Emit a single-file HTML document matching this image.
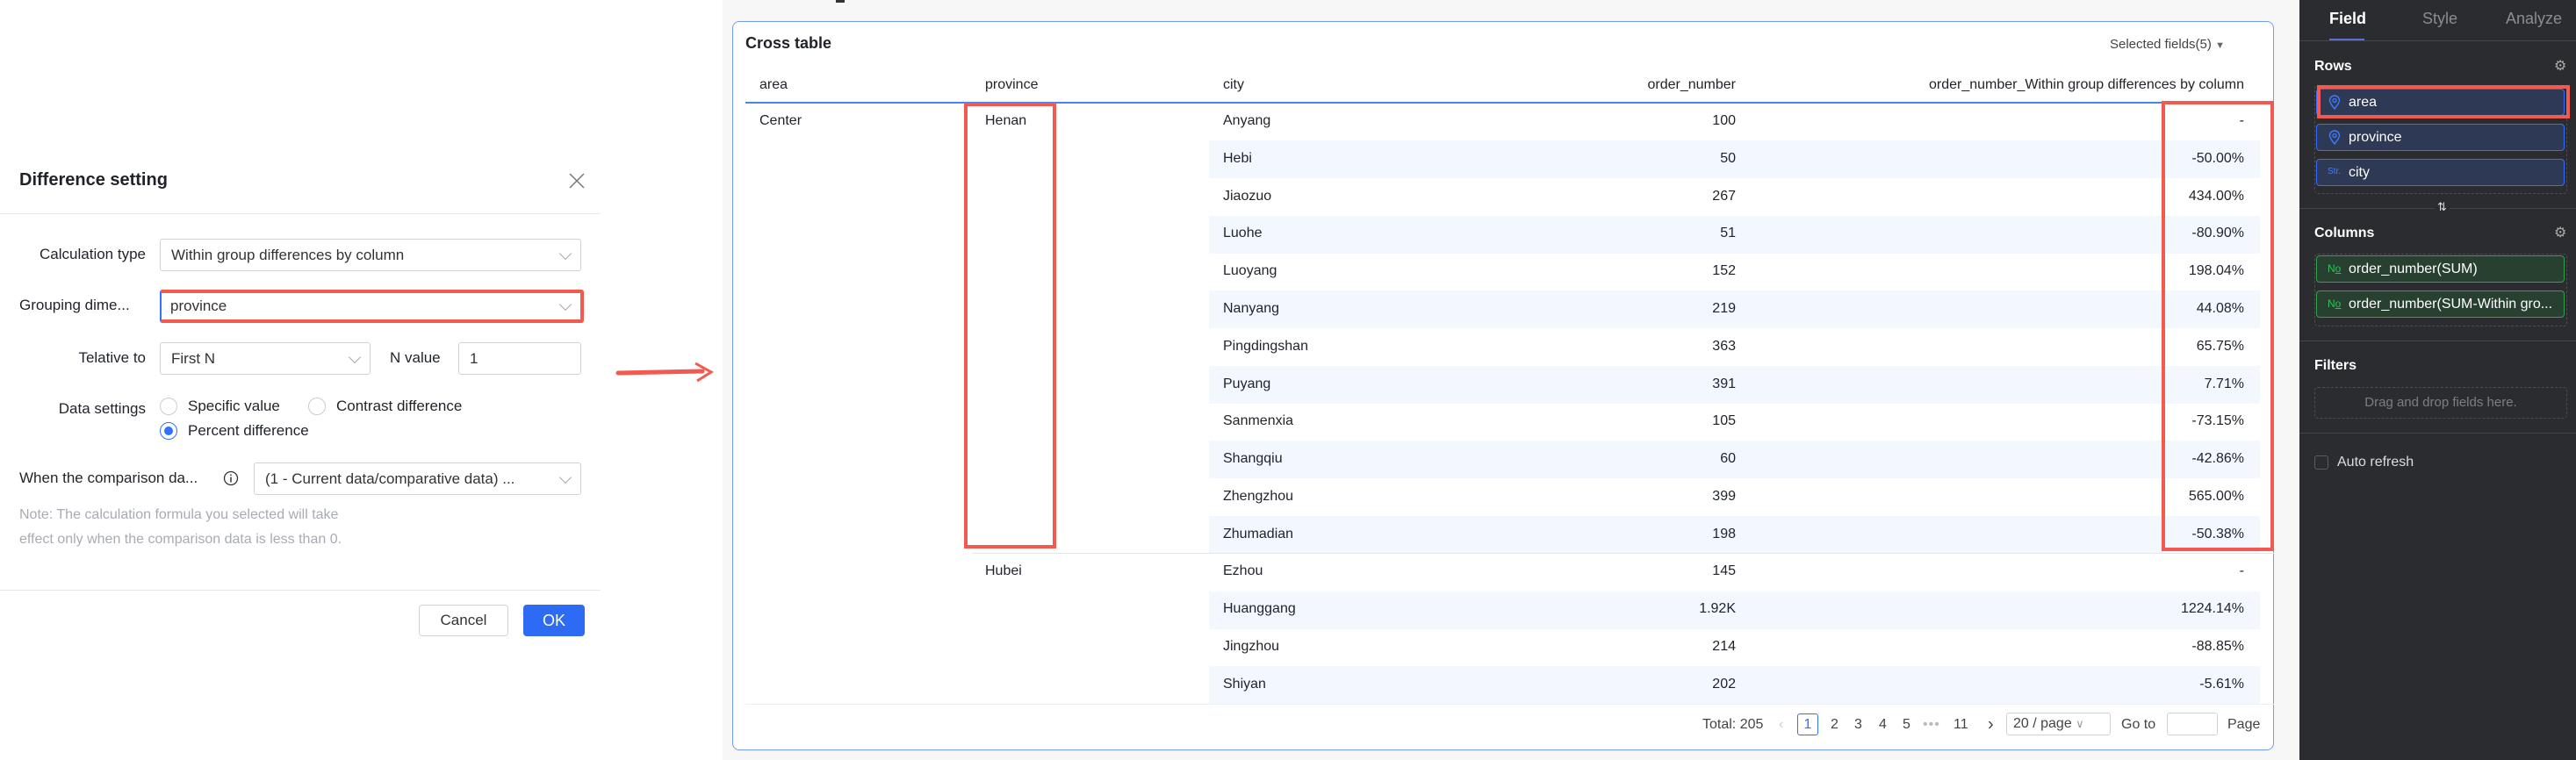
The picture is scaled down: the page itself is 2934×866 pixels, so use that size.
<!DOCTYPE html><html><head><meta charset="utf-8"><style>
*{box-sizing:border-box;margin:0;padding:0}
body{width:2934px;height:866px;position:relative;overflow:hidden;background:#fff;font-family:"Liberation Sans",Arial,sans-serif;color:#1f2329}
.a{position:absolute;white-space:nowrap}
.sel{position:absolute;border:1px solid #d0d3d6;border-radius:3px;background:#fff;font-size:17px;color:#333;padding-left:12px;display:flex;align-items:center}
.sel .ch{position:absolute;right:12px;top:50%;width:10px;height:10px;border-right:1.5px solid #aaa;border-bottom:1.5px solid #aaa;transform:translateY(-70%) rotate(45deg)}
.lbl{position:absolute;font-size:17px;color:#1f2329;text-align:right}
.radio{position:absolute;width:20px;height:20px;border:1px solid #c9cdd4;border-radius:50%;background:#fff}
.tx{position:absolute;font-size:16px;color:#1f2329;white-space:nowrap}
.r{text-align:right}
.band{position:absolute;left:1377px;width:1197px;height:43px;background:#f3f7fe}
.chip{position:absolute;left:2638px;width:283px;height:31px;border-radius:4px;font-size:16px;color:#fff;display:flex;align-items:center;padding-left:36px}
.rowc{background:#2e3a55;border:1px solid #3370ff}
.grn{background:#27402f;border:1px solid #2fa44c}
.dash{position:absolute;border:1px dashed #4a4c52;border-radius:4px}
.sep{position:absolute;left:2619px;width:315px;height:1px;background:#44464c}
.pg{position:absolute;top:826px;transform:translateY(-50%);font-size:16px;color:#444}
</style></head><body>
<!-- dialog -->
<div class="a" style="left:22px;top:194px;font-size:20px;font-weight:bold;color:#1f2329">Difference setting</div>
<svg class="a" style="left:648px;top:197px" width="18" height="18"><path d="M1 1L17 17M17 1L1 17" stroke="#777" stroke-width="1.5"/></svg>
<div class="a" style="left:0;top:243px;width:684px;height:1px;background:#e8e8e8"></div>
<div class="lbl" style="left:0;width:166px;top:280px">Calculation type</div>
<div class="sel" style="left:182px;top:272px;width:480px;height:37px">Within group differences by column<span class="ch"></span></div>
<div class="lbl" style="left:22px;top:338px;text-align:left">Grouping dime...</div>
<div class="sel" style="left:182px;top:330px;width:483px;height:38px;border:4px solid #f25a4f;border-left:2px solid #3370ff;padding-left:10px">province<span class="ch"></span></div>
<div class="lbl" style="left:0;width:166px;top:398px">Telative to</div>
<div class="sel" style="left:182px;top:390px;width:240px;height:37px">First N<span class="ch"></span></div>
<div class="lbl" style="left:444px;top:398px;text-align:left">N value</div>
<div class="sel" style="left:522px;top:390px;width:140px;height:37px">1</div>
<div class="lbl" style="left:0;width:166px;top:456px">Data settings</div>
<div class="radio" style="left:182px;top:453px"></div><div class="tx" style="left:214px;top:453px;font-size:17px">Specific value</div>
<div class="radio" style="left:351px;top:453px"></div><div class="tx" style="left:383px;top:453px;font-size:17px">Contrast difference</div>
<div class="radio" style="left:182px;top:481px;border-color:#3370ff"><div style="position:absolute;left:4px;top:4px;width:10px;height:10px;border-radius:50%;background:#3370ff"></div></div><div class="tx" style="left:214px;top:481px;font-size:17px">Percent difference</div>
<div class="lbl" style="left:22px;top:535px;text-align:left">When the comparison da...</div>
<svg class="a" style="left:254px;top:536px" width="18" height="18"><circle cx="9" cy="9" r="7.5" fill="none" stroke="#333" stroke-width="1.3"/><path d="M9 7.5V13.5M9 4.5V6" stroke="#333" stroke-width="1.5"/></svg>
<div class="sel" style="left:289px;top:527px;width:373px;height:37px">(1 - Current data/comparative data) ...<span class="ch"></span></div>
<div class="a" style="left:22px;top:573px;font-size:16px;color:#a8abb2;line-height:28px">Note: The calculation formula you selected will take<br>effect only when the comparison data is less than 0.</div>
<div class="a" style="left:0;top:672px;width:684px;height:1px;background:#e8e8e8"></div>
<div class="a" style="left:477px;top:689px;width:102px;height:36px;border:1px solid #d0d3d6;border-radius:4px;font-size:17px;display:flex;align-items:center;justify-content:center;color:#333">Cancel</div>
<div class="a" style="left:596px;top:689px;width:70px;height:36px;background:#2e6bf5;border-radius:4px;font-size:18px;display:flex;align-items:center;justify-content:center;color:#fff">OK</div>
<svg class="a" style="left:700px;top:410px" width="115" height="30"><path d="M4 15L100 13" stroke="#f25a4f" stroke-width="5" stroke-linecap="round"/><path d="M92 4L110 14L94 24" fill="none" stroke="#f25a4f" stroke-width="3"/></svg>
<!-- middle -->
<div class="a" style="left:823px;top:0;width:1796px;height:866px;background:#f7f7f7"></div>
<div class="a" style="left:952px;top:0;width:10px;height:3px;background:#333"></div>
<div class="a" style="left:834px;top:24px;width:1756px;height:831px;background:#fff;border:1.5px solid #6f9df7;border-radius:8px"></div>
<div class="a" style="left:849px;top:39px;font-size:18px;font-weight:bold;color:#1f2329">Cross table</div>
<div class="a" style="left:2403px;top:42px;font-size:15px;color:#444">Selected fields(5) <span style="font-size:11px;color:#666">▼</span></div>
<div class="tx" style="left:865px;top:88px">area</div>
<div class="tx" style="left:1122px;top:88px">province</div>
<div class="tx" style="left:1393px;top:88px">city</div>
<div class="tx r" style="left:1700px;width:277px;top:88px">order_number</div>
<div class="tx r" style="left:2100px;width:456px;top:88px">order_number_Within group differences by column</div>
<div class="a" style="left:849px;top:116px;width:1741px;height:2px;background:#4b83f2"></div>
<div class="band" style="top:160px"></div><div class="band" style="top:246px"></div><div class="band" style="top:331px"></div><div class="band" style="top:417px"></div><div class="band" style="top:502px"></div><div class="band" style="top:588px"></div><div class="band" style="top:674px"></div><div class="band" style="top:759px"></div>
<div class="a" style="left:1107px;top:630px;width:1483px;height:1px;background:#e5e6eb"></div>
<div class="a" style="left:849px;top:802px;width:1741px;height:1px;background:#eeeff2"></div>
<div class="tx" style="left:865px;top:129px">Center</div>
<div class="tx" style="left:1122px;top:129px">Henan</div>
<div class="tx" style="left:1122px;top:642px">Hubei</div>
<div style="position:absolute;left:0;top:129px">
<div class="tx" style="left:1393px;top:0">Anyang</div><div class="tx r" style="left:1800px;width:177px;top:0">100</div><div class="tx r" style="left:2300px;width:256px;top:0">-</div>
<div class="tx" style="left:1393px;top:43px">Hebi</div><div class="tx r" style="left:1800px;width:177px;top:43px">50</div><div class="tx r" style="left:2300px;width:256px;top:43px">-50.00%</div>
<div class="tx" style="left:1393px;top:86px">Jiaozuo</div><div class="tx r" style="left:1800px;width:177px;top:86px">267</div><div class="tx r" style="left:2300px;width:256px;top:86px">434.00%</div>
<div class="tx" style="left:1393px;top:128px">Luohe</div><div class="tx r" style="left:1800px;width:177px;top:128px">51</div><div class="tx r" style="left:2300px;width:256px;top:128px">-80.90%</div>
<div class="tx" style="left:1393px;top:171px">Luoyang</div><div class="tx r" style="left:1800px;width:177px;top:171px">152</div><div class="tx r" style="left:2300px;width:256px;top:171px">198.04%</div>
<div class="tx" style="left:1393px;top:214px">Nanyang</div><div class="tx r" style="left:1800px;width:177px;top:214px">219</div><div class="tx r" style="left:2300px;width:256px;top:214px">44.08%</div>
<div class="tx" style="left:1393px;top:257px">Pingdingshan</div><div class="tx r" style="left:1800px;width:177px;top:257px">363</div><div class="tx r" style="left:2300px;width:256px;top:257px">65.75%</div>
<div class="tx" style="left:1393px;top:300px">Puyang</div><div class="tx r" style="left:1800px;width:177px;top:300px">391</div><div class="tx r" style="left:2300px;width:256px;top:300px">7.71%</div>
<div class="tx" style="left:1393px;top:342px">Sanmenxia</div><div class="tx r" style="left:1800px;width:177px;top:342px">105</div><div class="tx r" style="left:2300px;width:256px;top:342px">-73.15%</div>
<div class="tx" style="left:1393px;top:385px">Shangqiu</div><div class="tx r" style="left:1800px;width:177px;top:385px">60</div><div class="tx r" style="left:2300px;width:256px;top:385px">-42.86%</div>
<div class="tx" style="left:1393px;top:428px">Zhengzhou</div><div class="tx r" style="left:1800px;width:177px;top:428px">399</div><div class="tx r" style="left:2300px;width:256px;top:428px">565.00%</div>
<div class="tx" style="left:1393px;top:471px">Zhumadian</div><div class="tx r" style="left:1800px;width:177px;top:471px">198</div><div class="tx r" style="left:2300px;width:256px;top:471px">-50.38%</div>
<div class="tx" style="left:1393px;top:513px">Ezhou</div><div class="tx r" style="left:1800px;width:177px;top:513px">145</div><div class="tx r" style="left:2300px;width:256px;top:513px">-</div>
<div class="tx" style="left:1393px;top:556px">Huanggang</div><div class="tx r" style="left:1800px;width:177px;top:556px">1.92K</div><div class="tx r" style="left:2300px;width:256px;top:556px">1224.14%</div>
<div class="tx" style="left:1393px;top:599px">Jingzhou</div><div class="tx r" style="left:1800px;width:177px;top:599px">214</div><div class="tx r" style="left:2300px;width:256px;top:599px">-88.85%</div>
<div class="tx" style="left:1393px;top:642px">Shiyan</div><div class="tx r" style="left:1800px;width:177px;top:642px">202</div><div class="tx r" style="left:2300px;width:256px;top:642px">-5.61%</div>
</div>
<div class="a" style="left:1098px;top:117px;width:105px;height:508px;border:4px solid #f25a4f"></div>
<div class="a" style="left:2462px;top:115px;width:128px;height:513px;border:4px solid #f25a4f"></div>
<div class="pg" style="left:1939px">Total: 205</div>
<div class="pg" style="left:2026px;color:#ccc">‹</div>
<div class="a" style="left:2047px;top:813px;width:24px;height:25px;border:1px solid #3370ff;border-radius:3px;color:#3370ff;font-size:16px;text-align:center;line-height:23px">1</div>
<div class="pg" style="left:2085px">2</div><div class="pg" style="left:2112px">3</div><div class="pg" style="left:2140px">4</div><div class="pg" style="left:2167px">5</div>
<div class="pg" style="left:2190px;color:#bbb;letter-spacing:1px">•••</div>
<div class="pg" style="left:2225px">11</div><div class="pg" style="left:2264px;font-size:20px">›</div>
<div class="a" style="left:2285px;top:812px;width:119px;height:26px;border:1px solid #d0d3d6;border-radius:3px;font-size:16px;color:#444;padding-left:7px;line-height:24px">20 / page <span style="color:#999;font-size:13px">∨</span></div>
<div class="pg" style="left:2416px">Go to</div>
<div class="a" style="left:2468px;top:812px;width:58px;height:26px;border:1px solid #d0d3d6;border-radius:3px"></div>
<div class="pg" style="left:2537px">Page</div>
<!-- right panel -->
<div class="a" style="left:2619px;top:0;width:315px;height:866px;background:#2b2c30"></div>
<div class="a" style="left:2653px;top:11px;font-size:18px;font-weight:bold;color:#fff">Field</div>
<div class="a" style="left:2759px;top:11px;font-size:18px;color:#8b8d92">Style</div>
<div class="a" style="left:2854px;top:11px;font-size:18px;color:#8b8d92">Analyze</div>
<div class="sep" style="top:46px"></div>
<div class="a" style="left:2653px;top:44px;width:40px;height:2px;background:#5b6fd8"></div>
<div class="a" style="left:2636px;top:67px;font-size:16px;font-weight:bold;color:#fff">Rows</div>
<div class="a" style="left:2909px;top:65px;font-size:16px;color:#aaa">⚙</div>
<div class="dash" style="left:2636px;top:97px;width:288px;height:124px"></div>
<div class="chip rowc" style="top:101px">area</div>
<div class="chip rowc" style="top:141px">province</div>
<div class="chip rowc" style="top:181px">city</div>
<svg class="a" style="left:2652px;top:108px" width="14" height="18"><path d="M7 16C3 11 1.5 8.5 1.5 6.5a5.5 5.5 0 0 1 11 0C12.5 8.5 11 11 7 16Z" fill="none" stroke="#3f7cff" stroke-width="1.4"/><circle cx="7" cy="6.5" r="2" fill="none" stroke="#3f7cff" stroke-width="1.3"/></svg>
<svg class="a" style="left:2652px;top:148px" width="14" height="18"><path d="M7 16C3 11 1.5 8.5 1.5 6.5a5.5 5.5 0 0 1 11 0C12.5 8.5 11 11 7 16Z" fill="none" stroke="#3f7cff" stroke-width="1.4"/><circle cx="7" cy="6.5" r="2" fill="none" stroke="#3f7cff" stroke-width="1.3"/></svg>
<div class="a" style="left:2651px;top:190px;font-size:10px;color:#3f7cff">Str.</div>
<div class="a" style="left:2639px;top:97px;width:288px;height:38px;border:4px solid #f25a4f"></div>
<div class="sep" style="top:237px"></div>
<div class="a" style="left:2773px;top:228px;font-size:13px;color:#ddd;background:#2b2c30;padding:0 3px">⇅</div>
<div class="a" style="left:2636px;top:257px;font-size:16px;font-weight:bold;color:#fff">Columns</div>
<div class="a" style="left:2909px;top:255px;font-size:16px;color:#aaa">⚙</div>
<div class="dash" style="left:2636px;top:289px;width:288px;height:83px"></div>
<div class="chip grn" style="top:291px">order_number(SUM)</div>
<div class="chip grn" style="top:331px">order_number(SUM-Within gro...</div>
<div class="a" style="left:2651px;top:299px;font-size:12px;color:#2fc15a">N<u>o</u></div>
<div class="a" style="left:2651px;top:339px;font-size:12px;color:#2fc15a">N<u>o</u></div>
<div class="sep" style="top:388px"></div>
<div class="a" style="left:2636px;top:408px;font-size:16px;font-weight:bold;color:#fff">Filters</div>
<div class="dash" style="left:2636px;top:441px;width:288px;height:36px;font-size:15px;color:#7c7e83;text-align:center;line-height:34px">Drag and drop fields here.</div>
<div class="sep" style="top:493px"></div>
<div class="a" style="left:2636px;top:519px;width:16px;height:16px;border:1px solid #5a5c62;border-radius:3px"></div>
<div class="a" style="left:2662px;top:518px;font-size:16px;color:#ddd">Auto refresh</div>
</body></html>
